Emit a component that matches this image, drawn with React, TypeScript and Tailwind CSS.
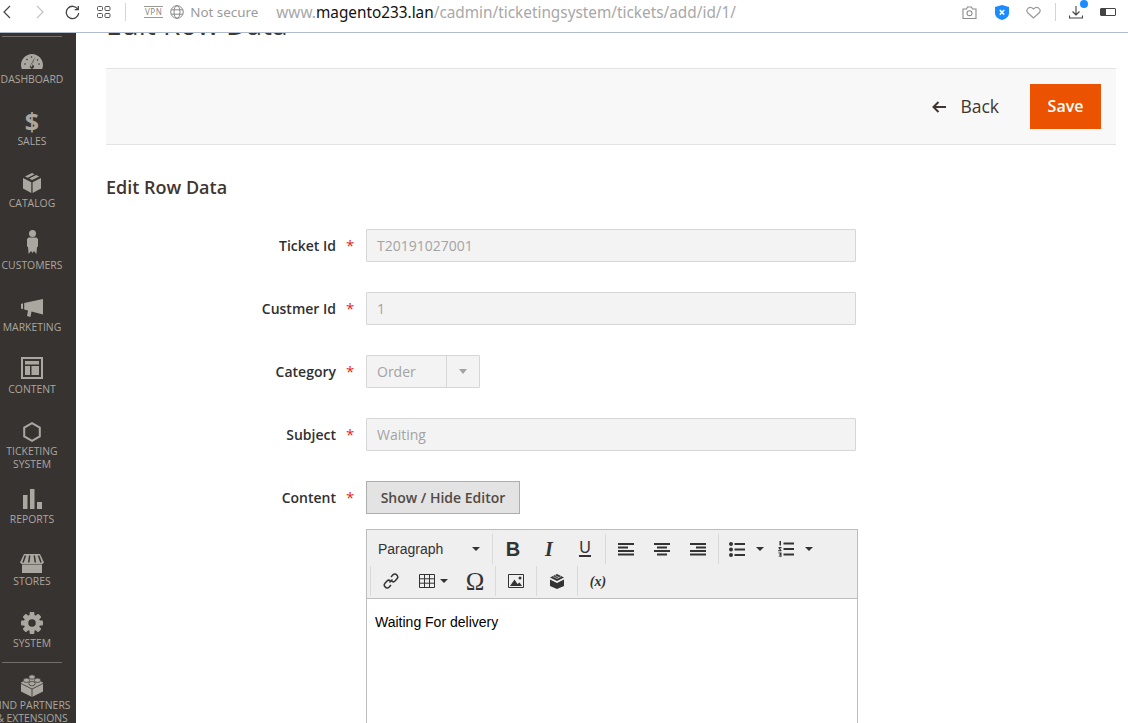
import { ReactNode } from "react";

const open = "font-['Open_Sans',sans-serif]";

const navItems: { label: ReactNode; icon: ReactNode; h: string }[] = [
  {
    label: "DASHBOARD",
    h: "h-[62px]",
    icon: (
      <svg width="22" height="15" viewBox="0 0 22 15" fill="currentColor" className="shrink-0">
        <path d="M11 0C5 0 0 5 0 11c0 1.500.3 2.800.8 4h20.400c.5-1.200.8-2.500.8-4C22 5 17 0 11 0z" />
        <path d="M13.800 3.500l-2.200 7.200a2 2 0 1 1-2 .4z" fill="#373330" />
        <path d="M13.200 5.500l-1.900 5.700a1 1 0 1 1-1.200-.4z" fill="currentColor" />
        <circle cx="4" cy="10" r=".8" fill="#373330" />
        <circle cx="6" cy="5.500" r=".8" fill="#373330" />
        <circle cx="10.500" cy="3" r=".8" fill="#373330" />
        <circle cx="18" cy="10" r=".8" fill="#373330" />
        <circle cx="16.500" cy="6" r=".8" fill="#373330" />
      </svg>
    ),
  },
  {
    label: "SALES",
    h: "h-[62px]",
    icon: <span className="mb-[4px] text-[25px] leading-[24px] font-bold">$</span>,
  },
  {
    label: "CATALOG",
    h: "h-[62px]",
    icon: (
      <svg width="18" height="20" viewBox="0 0 18 20" fill="currentColor" className="mb-[4px] shrink-0">
        <path d="M9 0l2.600 1.300-6.800 3.500L2 3.600z" />
        <path d="M13.200 2l3 1.500L9 7.100 6.300 5.600z" />
        <path d="M0 5l8.300 4.200V20L0 15.600zM18 5l-8.400 4.200V20l8.400-4.400z" />
      </svg>
    ),
  },
  {
    label: "CUSTOMERS",
    h: "h-[62px]",
    icon: (
      <svg width="11" height="24" viewBox="0 0 11 24" fill="currentColor" className="mb-[10px] shrink-0">
        <circle cx="5.500" cy="3.500" r="3.500" />
        <path d="M1.500 7.500h8L11 9v7.500l-1 .5-.6 7-2.400-3-1.500 2-1.500-2-2.400 3L1 17l-1-.5V9z" />
      </svg>
    ),
  },
  {
    label: "MARKETING",
    h: "h-[62px]",
    icon: (
      <svg width="22" height="18" viewBox="0 0 22 18" fill="currentColor" className="mb-[2px] shrink-0">
        <path d="M0 5l2-.7v6L0 9.600z" />
        <path d="M3.200 4L22 0v15.500l-11.500-3-1 5.500-3.500-1 1-5.400-3.800-1z" />
      </svg>
    ),
  },
  {
    label: "CONTENT",
    h: "h-[62px]",
    icon: (
      <svg width="22" height="22" viewBox="0 0 22 22" fill="currentColor" className="mb-[6px] shrink-0">
        <path fillRule="evenodd" d="M0 0h22v22H0zM2 2v18h18V2z" />
        <path d="M4 4h14v3.500H4zM4 9h5v9H4zM10.500 9H18v9h-7.500z" />
      </svg>
    ),
  },
  {
    label: (
      <>
        TICKETING
        <br />
        SYSTEM
      </>
    ),
    h: "h-[68px]",
    icon: (
      <svg width="18" height="20" viewBox="0 0 18 20" fill="none" stroke="currentColor" strokeWidth="2" className="mb-[3px] shrink-0">
        <path d="M9 1.200l7.800 4.400v8.800L9 18.800l-7.800-4.400V5.600z" />
      </svg>
    ),
  },
  {
    label: "REPORTS",
    h: "h-[62px]",
    icon: (
      <svg width="19" height="20" viewBox="0 0 19 20" fill="currentColor" className="mb-[4px] shrink-0">
        <path d="M0 6h4.500v14H0zM7 0h4.500v20H7zM14 13h5v7h-5z" />
      </svg>
    ),
  },
  {
    label: "STORES",
    h: "h-[62px]",
    icon: (
      <svg width="24" height="19" viewBox="0 0 24 19" fill="currentColor" className="shrink-0">
        <path d="M4 0h16l4 8.500-1.500 1.500H1.500L0 8.500z" />
        <path d="M5.500 1.500L3 8.500M9.700 1.500L8.700 8.500M14.300 1.500l1 7M18.500 1.500l2.500 7" stroke="#373330" strokeWidth="1.500" />
        <path d="M2 10.500h20V19H2z" />
      </svg>
    ),
  },
  {
    label: "SYSTEM",
    h: "h-[49px]",
    icon: (
      <svg width="22" height="22" viewBox="0 0 22 22" fill="currentColor" className="mb-[4px] shrink-0">
        <circle cx="11" cy="11" r="6" fill="none" stroke="currentColor" strokeWidth="4.500" />
        {[0, 45, 90, 135, 180, 225, 270, 315].map((a) => (
          <rect key={a} x="8.600" y="0" width="4.800" height="5" rx="1" transform={`rotate(${a} 11 11)`} />
        ))}
      </svg>
    ),
  },
];

const fields = [
  { label: "Ticket Id", value: "T20191027001" },
  { label: "Custmer Id", value: "1" },
  { label: "Category", value: "Order", select: true },
  { label: "Subject", value: "Waiting" },
];

function Sidebar() {
  return (
    <aside className={`w-[76px] shrink-0 overflow-hidden bg-[#373330] pt-[3px] text-[#aaa6a0] ${open}`}>
      <div className="w-[64px]">
        <div className="mx-[2px] mb-[12px] h-px bg-[#736e69]" />
        {navItems.map((item, i) => (
          <div key={i} className={`flex flex-col items-center ${item.h}`}>
            <div className="flex h-[24px] items-center justify-center">{item.icon}</div>
            <div className="whitespace-nowrap text-center text-[10.4px] leading-[13px]">{item.label}</div>
          </div>
        ))}
        <div className="mx-[2px] mb-[12px] h-px bg-[#736e69]" />
        <div className="flex flex-col items-center">
          <div className="flex h-[24px] items-center justify-center">
            <svg width="22" height="23" viewBox="0 0 22 23" fill="currentColor" className="mb-[3px] shrink-0">
              <path d="M11 3L22 8.500v9L11 23 0 17.500v-9z" />
              <path d="M0 9.500L11 15l11-5.500M11 15v8" fill="none" stroke="#373330" strokeWidth=".8" />
              <g stroke="#373330" strokeWidth=".7">
                <ellipse cx="11" cy="3" rx="3.200" ry="2.200" />
                <ellipse cx="5.500" cy="6.300" rx="3.200" ry="2.200" />
                <ellipse cx="16.500" cy="6.300" rx="3.200" ry="2.200" />
                <ellipse cx="11" cy="9.600" rx="3.200" ry="2.200" />
              </g>
            </svg>
          </div>
          <div className="whitespace-nowrap text-center text-[10.4px] leading-[13px]">
            FIND PARTNERS
            <br />& EXTENSIONS
          </div>
        </div>
      </div>
    </aside>
  );
}

function BrowserBar() {
  return (
    <header className="flex h-[33px] shrink-0 items-center border-b border-[#b0bccb] bg-white pb-[8px] font-['Noto_Sans',sans-serif] text-[#3c3c3c]">
      <svg width="10" height="14" viewBox="0 0 10 14" fill="none" stroke="#444" strokeWidth="1.200" className="ml-[2px]">
        <path d="M8 1L2 7l6 6" />
      </svg>
      <svg width="10" height="14" viewBox="0 0 10 14" fill="none" stroke="#c4c4c4" strokeWidth="1.200" className="ml-[23px]">
        <path d="M2 1l6 6-6 6" />
      </svg>
      <svg width="15" height="15" viewBox="0 0 15 15" fill="none" stroke="#444" strokeWidth="1.300" className="ml-[20px]">
        <path d="M12.800 4.200A6.200 6.200 0 1 0 13.700 8" />
        <path d="M13.300 1v3.600H9.700" />
      </svg>
      <svg width="14" height="12" viewBox="0 0 14 12" fill="none" stroke="#555" strokeWidth="1" className="ml-[17px]">
        <rect x=".5" y=".5" width="5" height="4" rx="1" />
        <rect x="8" y=".5" width="5" height="4" rx="1" />
        <rect x=".5" y="7.500" width="5" height="4" rx="1" />
        <rect x="8" y="7.500" width="5" height="4" rx="1" />
      </svg>
      <div className="ml-[14px] h-[18px] w-px bg-[#d5d5d5]" />
      <div className="ml-[18px] border-y border-[#999] px-px text-[8px] leading-[10px] tracking-[0.5px] text-[#888]">VPN</div>
      <svg width="14" height="14" viewBox="0 0 14 14" fill="none" stroke="#888" strokeWidth="1" className="ml-[7px]">
        <circle cx="7" cy="7" r="6.300" />
        <ellipse cx="7" cy="7" rx="3" ry="6.300" />
        <path d="M1 4.800h12M1 9.200h12" />
      </svg>
      <span className="ml-[6px] text-[13.4px] leading-[20px] text-[#9b9b9b]">Not secure</span>
      <span className="ml-[18px] whitespace-nowrap text-[15.33px] leading-[20px] text-[#a8a8a8]">
        www.<span className="text-[#111]">magento233.lan</span>/cadmin/ticketingsystem/tickets/add/id/1/
      </span>
      <div className="flex-1" />
      <svg width="15" height="13" viewBox="0 0 15 13" fill="none" stroke="#8c8c8c" strokeWidth="1.100">
        <path d="M1 3h3.500l1-2h4l1 2H14v9.500H1z" />
        <circle cx="7.500" cy="7.200" r="2.500" />
      </svg>
      <svg width="14" height="15" viewBox="0 0 14 15" className="ml-[18px]">
        <path d="M7 0l7 2v6c0 3.500-3 6-7 7-4-1-7-3.500-7-7V2z" fill="#1a8cff" />
        <path d="M4.800 5l4.400 4.600M9.200 5L4.800 9.600" stroke="#fff" strokeWidth="1.600" />
      </svg>
      <svg width="15" height="13" viewBox="0 0 15 13" fill="none" stroke="#999" strokeWidth="1.200" className="ml-[17px]">
        <path d="M7.500 12L1.500 6.500C-.5 3.500 3.500-1 7.500 3c4-4 8 .5 6 3.500z" />
      </svg>
      <div className="ml-[14px] h-[18px] w-px bg-[#d5d5d5]" />
      <div className="relative ml-[13px] h-[14px] w-[14px]">
        <svg width="14" height="14" viewBox="0 0 14 14" fill="none" stroke="#444" strokeWidth="1.100">
          <path d="M7 1v8.500M3.500 6.500L7 10l3.500-3.500M.5 10.500v2.500h13v-2.500" />
        </svg>
        <div className="absolute -top-[5px] left-[11px] h-[8px] w-[8px] rounded-full bg-[#1a8cff]" />
      </div>
      <div className="ml-[17px] mr-[12px] flex h-[8px] w-[16px] overflow-hidden rounded-[1px] border border-[#444]">
        <div className="w-[5px] bg-[#444]" />
      </div>
    </header>
  );
}

function Field({ label, value, select }: { label: string; value: string; select?: boolean }) {
  return (
    <div className="mb-[30px] flex h-[33px] items-center">
      <label className="w-[230px] text-right text-[14px] font-semibold text-[#303030]">{label}</label>
      <span className="ml-[10px] w-[20px] text-[15px] leading-none text-[#e22626]">*</span>
      {select ? (
        <div className="flex h-[33px] w-[114px] rounded-[1px] border border-[#d6d6d6] bg-[#f3f3f3]">
          <div className="flex-1 pl-[10px] text-[14px] leading-[31px] text-[#a3a3a3]">{value}</div>
          <div className="flex w-[33px] items-center justify-center border-l border-[#d6d6d6]">
            <div className="h-0 w-0 border-x-[4px] border-t-[5px] border-x-transparent border-t-[#a3a3a3]" />
          </div>
        </div>
      ) : (
        <div className="h-[33px] w-[490px] rounded-[1px] border border-[#d6d6d6] bg-[#f3f3f3] pl-[10px] text-[14px] leading-[31px] text-[#a3a3a3]">
          {value}
        </div>
      )}
    </div>
  );
}

function Caret() {
  return <div className="h-0 w-0 shrink-0 border-x-[4px] border-t-[4px] border-x-transparent border-t-[#333]" />;
}

function Tool({ w, children }: { w: string; children: ReactNode }) {
  return <div className={`flex h-full items-center justify-center text-[#333] ${w}`}>{children}</div>;
}

const lines = (rows: [number, number][]) => (
  <svg width="16" height="15" viewBox="0 0 16 15" fill="#333">
    {rows.map(([x, w], i) => (
      <rect key={i} x={x} y={1 + i * 3.500} width={w} height="2" />
    ))}
  </svg>
);

function Toolbar() {
  return (
    <div className="h-[69px] border-b border-[#bdbdbd] bg-[#efefef] pt-[4px] font-['Liberation_Sans',sans-serif]">
      <div className="flex h-[30px]">
        <div className="flex w-[126px] items-center justify-between border-r border-[#d9d9d9] pl-[11px] pr-[12px] text-[14px] text-[#333]">
          Paragraph
          <Caret />
        </div>
        <div className="flex w-[113px] border-r border-[#d9d9d9] pl-[2px]">
          <Tool w="w-[36px]">
            <span className="text-[20px] font-bold">B</span>
          </Tool>
          <Tool w="w-[36px]">
            <span className="font-['Liberation_Serif',serif] text-[20px] font-bold italic">I</span>
          </Tool>
          <Tool w="w-[36px]">
            <span className="border-b-2 border-[#333] text-[16px] leading-[14px]">U</span>
          </Tool>
        </div>
        <div className="flex w-[113px] border-r border-[#d9d9d9] pl-[2px]">
          <Tool w="w-[36px]">{lines([[0, 16], [0, 10], [0, 16], [0, 16]])}</Tool>
          <Tool w="w-[36px]">{lines([[0, 16], [3, 10], [0, 16], [3, 10]])}</Tool>
          <Tool w="w-[36px]">{lines([[0, 16], [6, 10], [0, 16], [0, 16]])}</Tool>
        </div>
        <div className="flex items-center pl-[10px]">
          <svg width="16" height="15" viewBox="0 0 16 15" fill="#333" className="shrink-0">
            <circle cx="2" cy="2" r="2" />
            <circle cx="2" cy="7.500" r="2" />
            <circle cx="2" cy="13" r="2" />
            <path d="M5.500 1h10.500v2H5.500zM5.500 6.500h10.500v2H5.500zM5.500 12h10.500v2H5.500z" />
          </svg>
          <div className="ml-[11px]">
            <Caret />
          </div>
          <svg width="16" height="16" viewBox="0 0 16 16" fill="#333" className="ml-[14px] shrink-0">
            <path d="M5.500 1.500H16v2H5.500zM5.500 7H16v2H5.500zM5.500 12.500H16v2H5.500z" />
            <path d="M1.500 0H3v4.500H1.500zM.5 6h3v1.200H2L3.500 9.500v.8h-3.500v-1h2L.500 7zM.5 11.500h3v5h-3v-1h2v-1H1v-1h1v-1H.5z" />
          </svg>
          <div className="ml-[11px]">
            <Caret />
          </div>
        </div>
      </div>
      <div className="mt-[2px] flex h-[30px] pl-[3px]">
        <div className="flex border-x border-[#d9d9d9]">
          <Tool w="w-[40px]">
            <svg width="16" height="16" viewBox="0 0 16 16" fill="none" stroke="#333" strokeWidth="1.500">
              <path d="M6.500 9.500l3-3" />
              <path d="M8 4l2-2.200a2.500 2.500 0 0 1 4 .5 2.600 2.600 0 0 1 0 3.500L12 8a2.500 2.500 0 0 1-3.500 0" />
              <path d="M8 12l-2 2.200a2.500 2.500 0 0 1-4-.5 2.600 2.600 0 0 1 0-3.500L4 8a2.500 2.500 0 0 1 3.500 0" />
            </svg>
          </Tool>
          <div className="flex w-[44px] items-center pl-[8px]">
            <svg width="16" height="14" viewBox="0 0 16 14" fill="none" stroke="#333" strokeWidth="1" className="shrink-0">
              <path d="M.5.500h15v13H.5zM.5 4.800h15M.5 9.200h15M5.500.5v13M10.500.5v13" />
            </svg>
            <div className="ml-[5px]">
              <Caret />
            </div>
          </div>
          <Tool w="w-[40px]">
            <span className="font-['Liberation_Serif',serif] text-[25px] leading-none">Ω</span>
          </Tool>
        </div>
        <div className="flex border-r border-[#d9d9d9]">
          <Tool w="w-[40px]">
            <svg width="16" height="14" viewBox="0 0 16 14" fill="none" stroke="#333" strokeWidth="1">
              <path d="M.5.500h15v13H.5z" />
              <path d="M2 12l4.500-6.500L9.500 10l2-1.500L14 12z" fill="#333" stroke="none" />
              <circle cx="12" cy="4" r="1.500" fill="#333" stroke="none" />
            </svg>
          </Tool>
        </div>
        <div className="flex border-r border-[#d9d9d9]">
          <Tool w="w-[40px]">
            <svg width="14" height="15" viewBox="0 0 14 15" fill="#333">
              <path d="M7 0l7 3.500-7 3.500L0 3.500z" />
              <path d="M3 2.500l4 2 4-2M5 1.500l4 2" fill="none" stroke="#efefef" strokeWidth=".6" />
              <path d="M0 5.500l7 3.500 7-3.500v6.500L7 15 0 12z" />
            </svg>
          </Tool>
        </div>
        <Tool w="w-[40px]">
          <span className="font-['Liberation_Serif',serif] text-[14px] font-bold italic">(x)</span>
        </Tool>
      </div>
    </div>
  );
}

export default function App() {
  return (
    <div className="flex h-[723px] w-[1128px] flex-col overflow-hidden bg-white">
      <BrowserBar />
      <div className="flex min-h-0 flex-1">
        <Sidebar />
        <main className={`min-w-0 flex-1 overflow-hidden pl-[30px] pr-[12px] ${open}`}>
          <h1 className="-mt-[28px] h-[63px] text-[28px] leading-[38px] text-[#41362f]">Edit Row Data</h1>
          <div className="flex h-[77px] items-center justify-end border-y border-[#e3e3e3] bg-[#f8f8f8] pr-[15px]">
            <svg width="14" height="12" viewBox="0 0 14 12" fill="none" stroke="#41362f" strokeWidth="2">
              <path d="M6.500 1L1.500 6l5 5M1.500 6H14" />
            </svg>
            <span className="mb-[2px] ml-[14px] text-[17.5px] leading-[24px] text-[#41362f]">Back</span>
            <button className="ml-[31px] h-[45px] w-[71px] bg-[#eb5202] pb-[2px] text-[16px] font-semibold text-white">Save</button>
          </div>
          <h2 className="mt-[29px] text-[18px] font-semibold leading-[27px] text-[#41362f]">Edit Row Data</h2>
          <div className="mt-[28px]">
            {fields.map((f) => (
              <Field key={f.label} {...f} />
            ))}
            <div className="flex items-start">
              <label className="w-[230px] text-right text-[14px] font-semibold leading-[33px] text-[#303030]">Content</label>
              <span className="ml-[10px] w-[20px] text-[15px] leading-[33px] text-[#e22626]">*</span>
              <div>
                <button className="h-[33px] w-[154px] border border-[#adadad] bg-[#e3e3e3] text-[14px] font-semibold text-[#514943]">
                  Show / Hide Editor
                </button>
                <div className="mt-[15px] h-[260px] w-[492px] border border-[#bdbdbd]">
                  <Toolbar />
                  <p className="pl-[8px] pt-[14px] font-['Liberation_Sans',sans-serif] text-[14px] leading-[18px] text-black">
                    Waiting For delivery
                  </p>
                </div>
              </div>
            </div>
          </div>
        </main>
      </div>
    </div>
  );
}
